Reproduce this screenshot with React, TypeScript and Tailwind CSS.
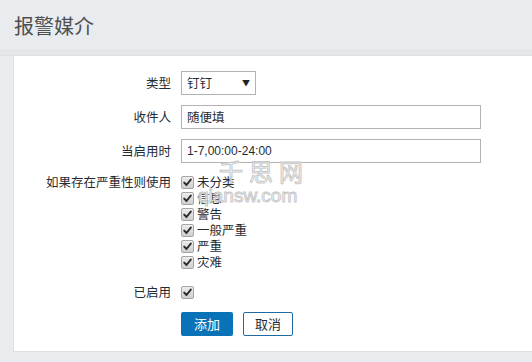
const severities = ['未分类', '信息', '警告', '一般严重', '严重', '灾难'];

function CheckBox() {
  return (
    <span className="inline-flex h-[13px] w-[13px] shrink-0 items-center justify-center rounded-[2px] border border-[#a5a5a5] bg-gradient-to-b from-[#ededed] to-[#cfcfcf]">
      <svg width="9" height="9" viewBox="0 0 9 9">
        <path d="M1.2 4.6 L3.5 7 L7.8 1.6" fill="none" stroke="#2a2a2a" strokeWidth="1.9" strokeLinecap="round" strokeLinejoin="round" />
      </svg>
    </span>
  );
}

export default function App() {
  return (
    <div className="relative h-[362px] w-[532px] overflow-hidden bg-[#e9ecef] font-['Noto_Sans_CJK_SC','Liberation_Sans',sans-serif] text-[12.5px] text-[#1f2c33]">
      <h1 className="pl-[14px] pt-[11px] text-[20px] leading-[30px] text-[#4f4f4f]">报警媒介</h1>
      <div className="mt-[9px] h-[6px] border-t border-b border-[#dfe3e6] bg-[#e4e8eb]" />
      <div className="ml-[13px] border-l border-b border-[#dde1e4] bg-white pb-[15px] pt-[15px]">
        <div className="grid grid-cols-[157px_1fr] gap-x-[10px]">
          <div className="flex h-[24px] items-center justify-end">类型</div>
          <div>
            <div className="flex h-[24px] w-[75px] items-center justify-between border border-[#b2b2b2] px-[5px]">
              <span>钉钉</span>
              <span className="text-[8px] text-[#222]">▼</span>
            </div>
          </div>

          <div className="mt-[10px] flex h-[24px] items-center justify-end">收件人</div>
          <div className="mt-[10px] flex h-[24px] w-[300px] items-center border border-[#b2b2b2] px-[5px]">随便填</div>

          <div className="mt-[10px] flex h-[24px] items-center justify-end">当启用时</div>
          <div className="mt-[10px] flex h-[24px] w-[300px] items-center border border-[#b2b2b2] px-[5px] font-['Liberation_Sans',sans-serif] text-[12px]">
            1-7,00:00-24:00
          </div>

          <div className="mt-[11px] flex h-[16px] items-center justify-end">如果存在严重性则使用</div>
          <div className="mt-[11px] flex flex-col">
            {severities.map((s) => (
              <div key={s} className="flex h-[16px] items-center gap-[3px]">
                <CheckBox />
                <span>{s}</span>
              </div>
            ))}
          </div>

          <div className="mt-[14px] flex h-[16px] items-center justify-end">已启用</div>
          <div className="mt-[14px] flex h-[16px] items-center">
            <CheckBox />
          </div>

          <div />
          <div className="mt-[12px] flex gap-[10px]">
            <button className="h-[24px] w-[52px] rounded-[2px] bg-[#0a73b8] text-[13px] text-white">添加</button>
            <button className="h-[24px] w-[50px] rounded-[2px] border border-[#1e6aa1] bg-white text-[13px] text-[#1f2c33]">取消</button>
          </div>
        </div>
      </div>

      <div className="pointer-events-none absolute left-[219px] top-[153px] text-[24px] tracking-[6px] text-[#ffffff99] [-webkit-text-stroke:1px_#c8c8c8]">
        千思网
      </div>
      <div className="pointer-events-none absolute left-[198px] top-[182px] font-['Liberation_Sans',sans-serif] text-[19px] text-[#ffffff99] [-webkit-text-stroke:1px_#c8c8c8]">
        qiansw.com
      </div>
    </div>
  );
}
